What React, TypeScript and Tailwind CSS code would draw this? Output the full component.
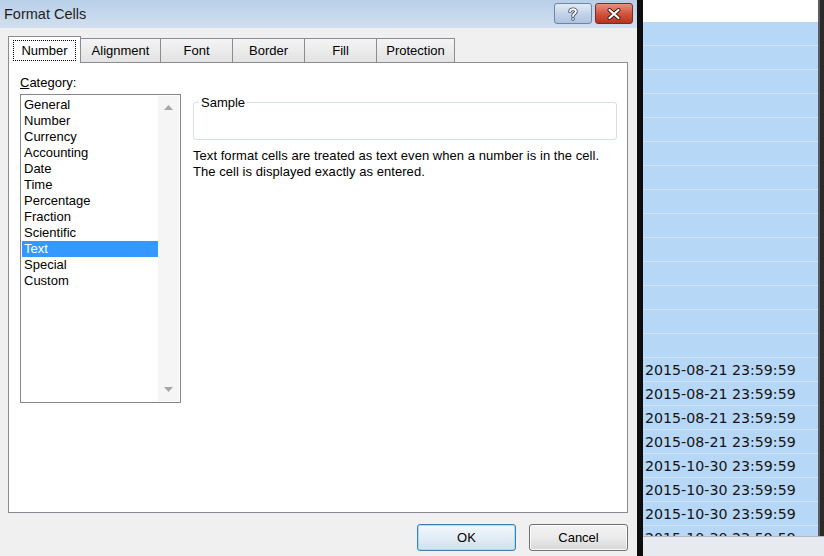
import React from 'react';

const categories = ['General', 'Number', 'Currency', 'Accounting', 'Date', 'Time', 'Percentage', 'Fraction', 'Scientific', 'Text', 'Special', 'Custom'];

const tabs = [
  { label: 'Number', w: 'w-[73px]' },
  { label: 'Alignment', w: 'w-[81px]' },
  { label: 'Font', w: 'w-[73px]' },
  { label: 'Border', w: 'w-[73px]' },
  { label: 'Fill', w: 'w-[73px]' },
  { label: 'Protection', w: 'w-[79px]' },
];

const dates = [
  '2015-08-21 23:59:59',
  '2015-08-21 23:59:59',
  '2015-08-21 23:59:59',
  '2015-08-21 23:59:59',
  '2015-10-30 23:59:59',
  '2015-10-30 23:59:59',
  '2015-10-30 23:59:59',
  '2015-10-30 23:59:59',
];

const TitleButtons = () => (
  <div className="flex gap-[3px] pt-[3px] pr-[4px]">
    <div className="w-[38px] h-[21px] rounded-[3px] border border-[#6d86a6] bg-gradient-to-b from-[#e3ebf5] via-[#c4d4e8] to-[#aec3de] flex items-center justify-center">
      <svg width="12" height="14" viewBox="0 0 12 14">
        <path d="M3 4.5 C3 1.5 9 1.5 9 4.5 C9 6.5 6 6.5 6 9" fill="none" stroke="#3d4f66" strokeWidth="3.6" strokeLinecap="round" />
        <path d="M3 4.5 C3 1.5 9 1.5 9 4.5 C9 6.5 6 6.5 6 9" fill="none" stroke="#ffffff" strokeWidth="1.8" strokeLinecap="round" />
        <circle cx="6" cy="12" r="1.8" fill="#3d4f66" />
        <circle cx="6" cy="12" r="0.9" fill="#ffffff" />
      </svg>
    </div>
    <div className="w-[38px] h-[21px] rounded-[3px] border border-[#7a2c22] bg-gradient-to-b from-[#e6917f] via-[#d2553d] to-[#b8321f] flex items-center justify-center">
      <svg width="14" height="12" viewBox="0 0 14 12">
        <path d="M2.5 2 L11.5 10 M11.5 2 L2.5 10" stroke="#4a1b14" strokeWidth="4" strokeLinecap="round" />
        <path d="M2.5 2 L11.5 10 M11.5 2 L2.5 10" stroke="#ffffff" strokeWidth="2.2" strokeLinecap="round" />
      </svg>
    </div>
  </div>
);

const Arrow = ({ down }: { down?: boolean }) => (
  <svg width="9" height="5" viewBox="0 0 9 5">
    <path d={down ? 'M0 0 L9 0 L4.5 5 Z' : 'M0 5 L9 5 L4.5 0 Z'} fill="#a7a7a7" />
  </svg>
);

const FormatCells = () => (
  <div className="w-[637px] h-full flex flex-col font-['Liberation_Sans',sans-serif] text-[13px] text-black">
    <div className="h-[28px] flex justify-between bg-gradient-to-b from-[#b8cfe9] to-[#d2dfee]">
      <div className="pl-[4px] pt-[4px] text-[14.5px] text-[#1e1e1e]">Format Cells</div>
      <TitleButtons />
    </div>
    <div className="flex-1 bg-[#f0f0f0] flex flex-col pt-[8px]">
      <div className="flex items-end h-[26px] pl-[8px]">
        {tabs.map((t, i) =>
          i === 0 ? (
            <div key={t.label} className={`${t.w} h-[27px] -mb-px relative z-10 bg-white border border-b-0 border-[#898c95] flex items-center justify-center px-[4px] pt-[3px] pb-[2px]`}>
              <div className="w-full h-full border border-dotted border-black flex items-center justify-center leading-none">{t.label}</div>
            </div>
          ) : (
            <div key={t.label} className={`${t.w} h-[24px] -ml-px border border-b-0 border-[#898c95] bg-gradient-to-b from-[#f4f4f4] to-[#e3e3e3] flex items-center justify-center leading-none`}>
              {t.label}
            </div>
          )
        )}
      </div>
      <div className="ml-[8px] w-[620px] h-[451px] bg-white border border-[#898c95] flex gap-[12px] pl-[11px] pt-[12px]">
        <div className="w-[161px] flex flex-col gap-[3px]">
          <div className="h-[16px] leading-[16px]"><span className="underline">C</span>ategory:</div>
          <div className="h-[309px] border border-[#828790] flex p-[1px]">
            <div className="flex-1 flex flex-col pt-[1px]">
              {categories.map((c) => (
                <div key={c} className={`h-[16px] leading-[16px] pl-[2px] ${c === 'Text' ? 'bg-[#3399ff] text-white' : ''}`}>{c}</div>
              ))}
            </div>
            <div className="w-[21px] bg-[#f5f5f5] flex flex-col items-center justify-between py-[9px]">
              <Arrow />
              <Arrow down />
            </div>
          </div>
        </div>
        <div className="w-[424px] flex flex-col pt-[27px]">
          <div className="relative h-[38px] border border-[#d5dfe5] rounded-[3px]">
            <span className="absolute -top-[8px] left-[5px] bg-white px-[2px] leading-[16px]">Sample</span>
          </div>
          <div className="mt-[8px] leading-[16px] tracking-[0.05px]">
            <div>Text format cells are treated as text even when a number is in the cell.</div>
            <div>The cell is displayed exactly as entered.</div>
          </div>
        </div>
      </div>
      <div className="flex justify-end gap-[13px] pr-[9px] mt-[11px]">
        <div className="w-[99px] h-[27px] rounded-[3px] border border-[#3c7fb1] bg-gradient-to-b from-[#f3f8fc] via-[#e3edf6] to-[#cfdfec] shadow-[inset_0_0_0_1px_#a9dcf5] flex items-center justify-center">OK</div>
        <div className="w-[99px] h-[27px] rounded-[3px] border border-[#707070] bg-gradient-to-b from-[#f2f2f2] via-[#ebebeb] to-[#d6d6d6] shadow-[inset_0_0_0_1px_#fcfcfc] flex items-center justify-center">Cancel</div>
      </div>
    </div>
  </div>
);

const Sheet = () => (
  <div className="flex-1 flex flex-col font-['DejaVu_Sans',sans-serif] text-[14.2px] text-[#141414]">
    <div className="flex-1 flex overflow-hidden">
      <div className="w-[175px] flex flex-col">
        <div className="h-[22px] shrink-0 bg-white" />
        {Array.from({ length: 14 }).map((_, i) => (
          <div key={i} className="h-[24px] shrink-0 bg-[#b7d7f7] border-b border-[#cfe3f9]" />
        ))}
        {dates.map((d, i) => (
          <div key={i} className="h-[24px] shrink-0 bg-[#b7d7f7] border-b border-[#cfe3f9] pl-[2px] leading-[24px] whitespace-nowrap">{d}</div>
        ))}
      </div>
      <div className="flex-1 bg-[#2a2a2a] border-l-[2px] border-[#5c5c5c]" />
    </div>
    <div className="h-[20px] shrink-0 bg-[#e7eaee] border-t border-[#b5b9bf]" />
  </div>
);

export default function App() {
  return (
    <div className="w-[824px] h-[556px] flex overflow-hidden bg-[#f0f0f0]">
      <FormatCells />
      <div className="w-[6px] bg-[#0d0d0d]" />
      <Sheet />
    </div>
  );
}
